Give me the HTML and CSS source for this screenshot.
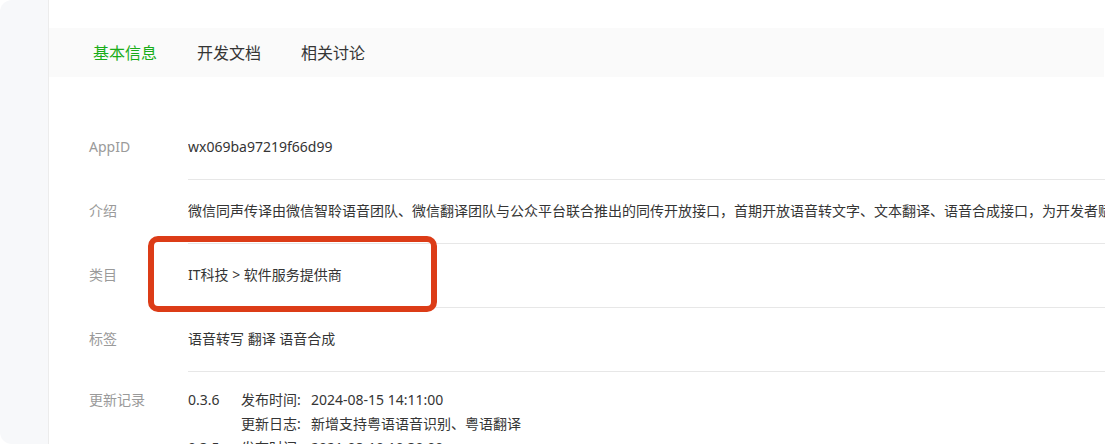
FILE: index.html
```html
<!DOCTYPE html>
<html lang="zh-CN">
<head>
<meta charset="utf-8">
<title>微信同声传译</title>
<link rel="stylesheet" href="styles.css">
</head>
<body>
<div class="app">
  <aside class="sidebar"></aside>
  <main class="main">
    <nav class="tabs">
      <span class="tab active">基本信息</span>
      <span class="tab">开发文档</span>
      <span class="tab">相关讨论</span>
    </nav>
    <section class="info">
      <div class="row">
        <div class="label">AppID</div>
        <div class="value">wx069ba97219f66d99</div>
      </div>
      <div class="row">
        <div class="label">介绍</div>
        <div class="value">微信同声传译由微信智聆语音团队、微信翻译团队与公众平台联合推出的同传开放接口，首期开放语音转文字、文本翻译、语音合成接口，为开发者赋能，提供更优质的服务。</div>
      </div>
      <div class="row">
        <div class="label">类目</div>
        <div class="value">IT科技 &gt; 软件服务提供商</div>
      </div>
      <div class="row">
        <div class="label">标签</div>
        <div class="value">语音转写 翻译 语音合成</div>
      </div>
      <div class="row row-last">
        <div class="label">更新记录</div>
        <div class="value updates">
          <div class="update">
            <div class="ver">0.3.6</div>
            <div class="kv">
              <div class="kv-line"><span class="k">发布时间:</span><span>2024-08-15 14:11:00</span></div>
              <div class="kv-line"><span class="k">更新日志:</span><span>新增支持粤语语音识别、粤语翻译</span></div>
            </div>
          </div>
          <div class="update">
            <div class="ver">0.3.5</div>
            <div class="kv">
              <div class="kv-line"><span class="k">发布时间:</span><span>2021-08-10 10:30:00</span></div>
            </div>
          </div>
        </div>
      </div>
    </section>
    <div class="highlight"></div>
  </main>
</div>
</body>
</html>
```

FILE: styles.css
```css
html, body {
  margin: 0;
  padding: 0;
  background: #ffffff;
  font-family: "Noto Sans", "Noto Sans CJK SC", sans-serif;
  overflow: hidden;
}

.app {
  display: flex;
  width: 1105px;
  height: 444px;
  overflow: hidden;
}

.sidebar {
  width: 48px;
  flex: none;
  background: #f7f8fa;
  border-right: 1px solid #ececec;
  border-radius: 12px 0 0 12px;
}

.main {
  position: relative;
  flex: 1;
  min-width: 0;
  padding-top: 28px;
  overflow: hidden;
}

.tabs {
  display: flex;
  gap: 40px;
  height: 49px;
  padding-left: 44px;
  margin-right: 1px;
  background: #fafafa;
  align-items: center;
}

.tab {
  font-size: 16px;
  line-height: 22px;
  color: #353535;
}

.tab.active {
  color: #1aad19;
}

.info {
  padding-top: 39px;
  padding-left: 40px;
}

.row {
  display: flex;
  font-size: 14px;
}

.label {
  width: 99px;
  flex: none;
  padding: 20px 0 21px;
  line-height: 22px;
  color: #9a9a9a;
}

.value {
  flex: 1;
  min-width: 0;
  padding: 20px 0 21px;
  line-height: 22px;
  color: #353535;
  white-space: nowrap;
  overflow: hidden;
  border-bottom: 1px solid #e7e7e7;
}

.row-last .label,
.row-last .value {
  padding-top: 16px;
  line-height: 24px;
}

.row-last .value {
  border-bottom: none;
}

.update {
  display: flex;
}

.ver {
  width: 53px;
  flex: none;
}

.kv-line {
  display: flex;
}

.k {
  width: 70px;
  flex: none;
}

.highlight {
  position: absolute;
  left: 99px;
  top: 236px;
  width: 289px;
  height: 76px;
  box-sizing: border-box;
  border: 6px solid #dc3c17;
  border-radius: 10px;
}
```
